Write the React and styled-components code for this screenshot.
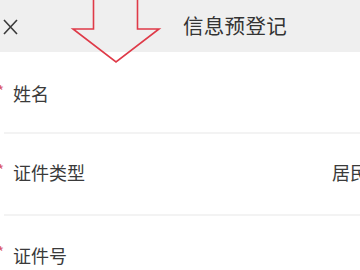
import React from "react";
import styled, { createGlobalStyle } from "styled-components";

const Global = createGlobalStyle`
  html, body { margin: 0; padding: 0; background: #fff; }
  body { width: 360px; height: 270px; overflow: hidden; font-family: "Noto Sans CJK SC", "Noto Sans", sans-serif; }
`;

const Page = styled.div`
  position: relative;
  width: 360px;
  height: 270px;
  overflow: hidden;
  background: #fff;
`;

const Header = styled.header`
  height: 52px;
  background: #efefef;
  display: flex;
  align-items: center;
  padding-left: 3px;
`;

const CloseButton = styled.span`
  display: flex;
  width: 15px;
  height: 16px;
  color: #3a3a3a;
  margin-top: 1px;
`;

const Title = styled.h1`
  margin: -1px 0 0 165px;
  font-size: 20.5px;
  font-weight: 400;
  color: #333;
  line-height: 1;
  letter-spacing: 0.3px;
`;

const Row = styled.div`
  height: ${(p) => p.$h}px;
  display: flex;
  align-items: center;
  margin-left: 4px;
  border-bottom: ${(p) => (p.$last ? "none" : "2px solid #f3f3f3")};
`;

const Star = styled.span`
  color: #d9576a;
  font-size: 15px;
  margin-left: -7px;
  width: 16px;
  align-self: flex-start;
  margin-top: ${(p) => p.$top}px;
  line-height: 1;
`;

const Label = styled.span`
  font-size: 18px;
  color: #3a3a3a;
  line-height: 1;
  margin-top: ${(p) => p.$dy || 0}px;
`;

const Value = styled.span`
  margin-left: auto;
  margin-right: -8px;
  font-size: 18px;
  color: #3a3a3a;
  line-height: 1;
  white-space: nowrap;
  margin-top: ${(p) => p.$dy || 0}px;
`;

const ArrowSvg = styled.svg`
  position: absolute;
  left: 0;
  top: 0;
  pointer-events: none;
`;

export default function App() {
  return (
    <Page>
      <Global />
      <Header>
        <CloseButton>
          <svg width="15" height="16" viewBox="0 0 15 16">
            <path d="M1 1 L14 15 M14 1 L1 15" stroke="currentColor" strokeWidth="1.6" fill="none" />
          </svg>
        </CloseButton>
        <Title>信息预登记</Title>
      </Header>
      <Row $h={80}>
        <Star $top={31}>*</Star>
        <Label $dy={2}>姓名</Label>
      </Row>
      <Row $h={80}>
        <Star $top={28}>*</Star>
        <Label $dy={-4}>证件类型</Label>
        <Value $dy={-4}>居民</Value>
      </Row>
      <Row $h={70} $last>
        <Star $top={28}>*</Star>
        <Label $dy={7}>证件号</Label>
      </Row>
      <ArrowSvg width="360" height="270">
        <polygon
          points="93.5,-2 93.5,29 73,29 116,62 159,29 137.5,29 137.5,-2"
          fill="none"
          stroke="#df3a48"
          strokeWidth="1.6"
          strokeLinejoin="miter"
        />
      </ArrowSvg>
    </Page>
  );
}
